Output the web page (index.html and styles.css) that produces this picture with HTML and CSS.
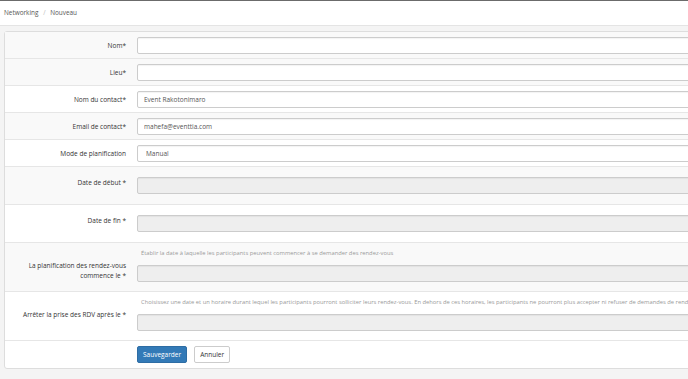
FILE: index.html
```html
<!DOCTYPE html>
<html lang="fr">
<head>
    <meta charset="UTF-8">
    <title>Networking - Nouveau</title>
    <link rel="stylesheet" href="styles.css">
</head>
<body>
    <div class="topline"></div>
    <div class="breadcrumb">
        <a href="#">Networking</a>
        <span class="sep">/</span>
        <span>Nouveau</span>
    </div>

    <div class="page">
        <form class="panel">
            <div class="row shade">
                <label>Nom*</label>
                <div class="field"><input type="text"></div>
            </div>
            <div class="row shade">
                <label>Lieu*</label>
                <div class="field"><input type="text"></div>
            </div>
            <div class="row">
                <label>Nom du contact*</label>
                <div class="field"><input type="text" value="Event Rakotonimaro"></div>
            </div>
            <div class="row shade">
                <label>Email de contact*</label>
                <div class="field"><input type="text" value="mahefa@eventtia.com"></div>
            </div>
            <div class="row">
                <label>Mode de planification</label>
                <div class="field"><div class="select">Manual</div></div>
            </div>
            <div class="row tall shade">
                <label>Date de début *</label>
                <div class="field"><input type="text" disabled></div>
            </div>
            <div class="row tall">
                <label>Date de fin *</label>
                <div class="field"><input type="text" disabled></div>
            </div>
            <div class="row help-row shade">
                <label>La planification des rendez-vous commence le *</label>
                <div class="field">
                    <p class="help">Établir la date à laquelle les participants peuvent commencer à se demander des rendez-vous</p>
                    <input type="text" disabled>
                </div>
            </div>
            <div class="row help-row">
                <label class="mid">Arrêter la prise des RDV après le *</label>
                <div class="field">
                    <p class="help">Choisissez une date et un horaire durant lequel les participants pourront solliciter leurs rendez-vous. En dehors de ces horaires, les participants ne pourront plus accepter ni refuser de demandes de rendez-vous.</p>
                    <input type="text" disabled>
                </div>
            </div>
            <div class="actions">
                <button type="button" class="btn primary">Sauvegarder</button>
                <button type="button" class="btn">Annuler</button>
            </div>
        </form>
    </div>
</body>
</html>
```

FILE: styles.css
```css
html, body {
    margin: 0;
    padding: 0;
}
body {
    width: 688px;
    height: 379px;
    overflow: hidden;
    font-family: 'Open Sans', sans-serif;
    font-size: 6.5px;
    color: #333;
    background-color: #f4f4f4;
}
.topline {
    height: 1px;
    background-color: #6b6b6b;
}
.breadcrumb {
    height: 24px;
    line-height: 23px;
    padding-left: 4px;
    background-color: #fff;
    border-bottom: 1px solid #e4e4e4;
    color: #555;
    font-size: 6.4px;
}
.breadcrumb a {
    color: #555;
    text-decoration: none;
}
.breadcrumb .sep {
    color: #bbb;
    margin: 0 3px;
}
.page {
    padding: 5px 0 0 4px;
}
.panel {
    width: 780px;
    background: #fff;
    border: 1px solid #ddd;
    border-radius: 3px;
}
.row {
    display: flex;
    align-items: center;
    padding: 5px 0 4px;
    border-bottom: 1px solid #e6e6e6;
}
.row.shade {
    background-color: #f9f9f9;
}
.row label {
    width: 121px;
    text-align: right;
    padding-right: 11px;
    line-height: 10px;
}
.row .field {
    flex: 1;
}
.row.tall {
    align-items: flex-start;
    padding: 10px 0;
}
.row.tall label {
    margin-top: 1px;
}
.row.help-row {
    align-items: flex-end;
    padding: 6px 0 9px;
}
.row.help-row label {
    padding-bottom: 1px;
}
.row.help-row label.mid {
    align-self: center;
    padding-bottom: 0;
}
.help {
    margin: 0 0 8px 4px;
    line-height: 8px;
    font-size: 5.8px;
    color: #999;
    white-space: nowrap;
}
input[type="text"], .select {
    display: block;
    box-sizing: border-box;
    width: 100%;
    height: 17px;
    padding: 0 6px;
    border: 1px solid #ccc;
    border-radius: 2px;
    background-color: #fff;
    font-family: 'Open Sans', sans-serif;
    font-size: 6.5px;
    color: #555;
    box-shadow: inset 0 1px 1px rgba(0, 0, 0, 0.05);
}
.select {
    line-height: 15px;
    padding-left: 8px;
}
input[disabled] {
    background-color: #eee;
}
.actions {
    display: flex;
    gap: 7px;
    padding: 5px 0 5px 132px;
}
.btn {
    height: 17px;
    padding: 0 5px;
    border: 1px solid #ccc;
    border-radius: 2px;
    background-color: #fff;
    color: #333;
    font-family: 'Open Sans', sans-serif;
    font-size: 6.5px;
}
.btn.primary {
    background-color: #337ab7;
    border-color: #2e6da4;
    color: #fff;
}
```
